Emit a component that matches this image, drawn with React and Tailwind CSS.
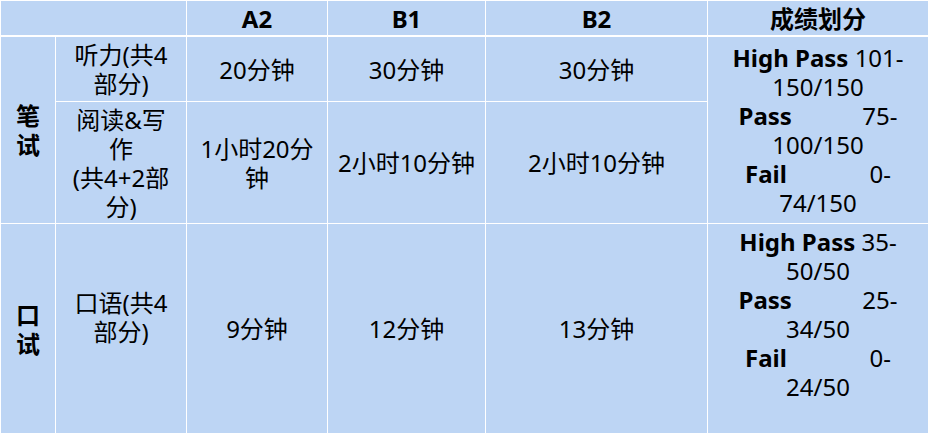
import React from "react";

const cell = "bg-[#bdd5f4] flex flex-col items-center justify-center text-center";

// one justified line, e.g. "Pass      75-"
const Spread = ({ label, value, w }) => (
  <div className={`flex justify-between ${w}`}>
    <span className="font-bold">{label}</span>
    <span>{value}</span>
  </div>
);

const Grades = ({ high, highTail, pass, passTail, fail, failTail }) => (
  <>
    <div>
      <span className="font-bold">High Pass</span> {high}
    </div>
    <div>{highTail}</div>
    <Spread label="Pass" value={pass} w="w-[159px]" />
    <div>{passTail}</div>
    <Spread label="Fail" value={fail} w="w-[146px]" />
    <div>{failTail}</div>
  </>
);

export default function App() {
  return (
    <div
      className="w-[930px] h-[433px] bg-white overflow-hidden text-black text-[24px] leading-[29px]"
      style={{ fontFamily: '"Noto Sans", "Noto Sans CJK SC", sans-serif' }}
    >
      <div className="grid grid-cols-[54px_130px_140px_157px_221px_220px] grid-rows-[35px_64px_121px_209px] gap-px pt-px pl-px">
        {/* header */}
        <div className={`${cell} col-span-2 border-b border-white`} />
        <div className={`${cell} font-bold border-b border-white`}>A2</div>
        <div className={`${cell} font-bold border-b border-white`}>B1</div>
        <div className={`${cell} font-bold border-b border-white`}>B2</div>
        <div className={`${cell} font-bold border-b border-white`}>成绩划分</div>

        {/* 笔试 */}
        <div className={`${cell} row-span-2 font-bold`}>
          <div>笔</div>
          <div>试</div>
        </div>
        <div className={cell}>
          <div>听力(共4</div>
          <div>部分)</div>
        </div>
        <div className={cell}>20分钟</div>
        <div className={cell}>30分钟</div>
        <div className={cell}>30分钟</div>
        <div className={`${cell} row-span-2`}>
          <Grades
            high="101-"
            highTail="150/150"
            pass="75-"
            passTail="100/150"
            fail="0-"
            failTail="74/150"
          />
        </div>

        <div className={cell}>
          <div>阅读&amp;写</div>
          <div>作</div>
          <div>(共4+2部</div>
          <div>分)</div>
        </div>
        <div className={cell}>
          <div>1小时20分</div>
          <div>钟</div>
        </div>
        <div className={cell}>2小时10分钟</div>
        <div className={cell}>2小时10分钟</div>

        {/* 口试 */}
        <div className={`${cell} font-bold`}>
          <div>口</div>
          <div>试</div>
        </div>
        <div className={`${cell} pb-[24px]`}>
          <div>口语(共4</div>
          <div>部分)</div>
        </div>
        <div className={cell}>9分钟</div>
        <div className={cell}>12分钟</div>
        <div className={cell}>13分钟</div>
        <div className={`${cell} pb-[29px]`}>
          <Grades
            high="35-"
            highTail="50/50"
            pass="25-"
            passTail="34/50"
            fail="0-"
            failTail="24/50"
          />
        </div>
      </div>
    </div>
  );
}
